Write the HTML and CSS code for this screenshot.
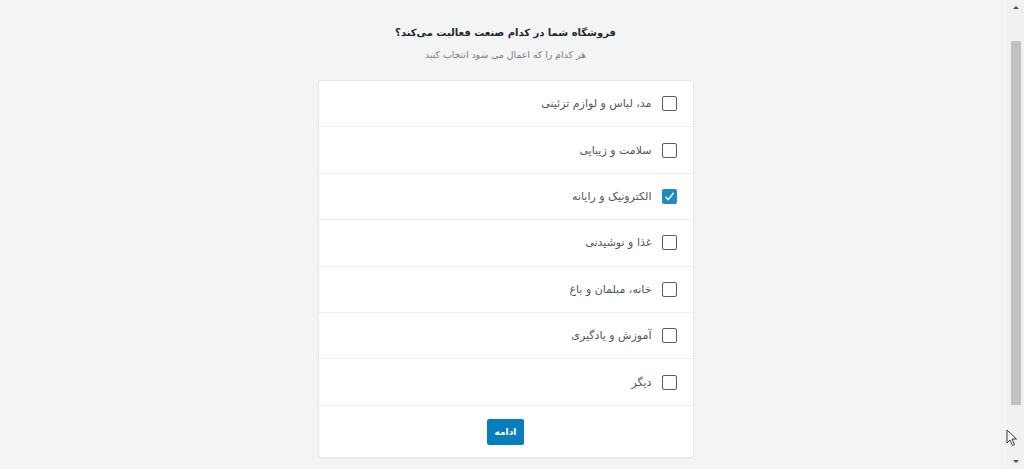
FILE: index.html
```html
<!DOCTYPE html>
<html lang="fa" dir="rtl">

<head>
    <meta charset="UTF-8">
    <meta name="viewport" content="width=device-width, initial-scale=1.0">
    <title>انتخاب صنعت</title>
    <link rel="stylesheet" href="styles.css">
</head>

<body>
    <div class="scrollbar">
        <span class="arrow up"></span>
        <div class="thumb"></div>
        <span class="arrow down"></span>
    </div>

    <main class="page">
        <h1 class="title">فروشگاه شما در کدام صنعت فعالیت می‌کند؟</h1>
        <p class="subtitle">هر کدام را که اعمال می شود انتخاب کنید</p>

        <form class="card">
            <label class="row"><span class="box"></span><span class="text">مد، لباس و لوازم تزئینی</span></label>
            <label class="row"><span class="box"></span><span class="text">سلامت و زیبایی</span></label>
            <label class="row"><span class="box checked">
                <svg width="15" height="15" viewBox="0 0 15 15"><path d="M3.5 7.8 L6.3 10.6 L11.6 3.8" fill="none" stroke="#fff" stroke-width="1.4"/></svg>
            </span><span class="text">الکترونیک و رایانه</span></label>
            <label class="row"><span class="box"></span><span class="text">غذا و نوشیدنی</span></label>
            <label class="row"><span class="box"></span><span class="text">خانه، مبلمان و باغ</span></label>
            <label class="row"><span class="box"></span><span class="text">آموزش و یادگیری</span></label>
            <label class="row"><span class="box"></span><span class="text">دیگر</span></label>
            <div class="footer">
                <button type="button">ادامه</button>
            </div>
        </form>
    </main>

    <!-- mouse pointer -->
    <svg class="cursor" width="12" height="18" viewBox="0 0 12 18">
        <path d="M1 1 L1 14 L4 11 L6.5 16.5 L8.5 15.5 L6 10 L10.5 10 Z" fill="#fff" stroke="#333" stroke-width="1"/>
    </svg>
</body>

</html>
```

FILE: styles.css
```css
body {
    margin: 0;
    height: 469px;
    overflow: hidden;
    background-color: #f3f4f4;
    font-family: "DejaVu Sans", sans-serif;
    display: flex;
    flex-direction: row;
}

.page {
    flex: 1;
    display: flex;
    flex-direction: column;
    align-items: center;
    padding-top: 27px;
    padding-left: 4px;
}

.title {
    margin: 0;
    font-size: 10px;
    font-weight: bold;
    color: #23282d;
}

.subtitle {
    margin: 11px 0 0;
    font-size: 9.3px;
    color: #787c82;
}

.card {
    margin-top: 20px;
    width: 376px;
    box-sizing: border-box;
    background: #fff;
    border: 1px solid #e3e5e6;
    border-radius: 3px;
    box-shadow: 0 1px 2px rgba(0, 0, 0, 0.04);
}

.row {
    display: flex;
    align-items: center;
    gap: 10px;
    height: 45.4px;
    padding-right: 16px;
    border-bottom: 1px solid #eef0f0;
    font-size: 11px;
    color: #50565c;
}

.box {
    width: 13px;
    height: 13px;
    border: 1px solid #555d66;
    border-radius: 2px;
    display: flex;
    align-items: center;
    justify-content: center;
}

.box.checked {
    width: 15px;
    height: 15px;
    border: none;
    background: #1e8cbe;
}

.footer {
    display: flex;
    justify-content: center;
    padding: 13px 0 12px;
}

button {
    width: 37px;
    height: 26px;
    padding: 0;
    border: none;
    border-radius: 2px;
    background-color: #0a7dbb;
    color: #fff;
    font-family: "DejaVu Sans", sans-serif;
    font-size: 9px;
    font-weight: bold;
}

.scrollbar {
    width: 17px;
    background: #f1f1f1;
    display: flex;
    flex-direction: column;
    align-items: center;
}

.thumb {
    width: 10px;
    height: 364px;
    margin-top: 32px;
    margin-left: 1px;
    background: #c1c1c1;
}

.arrow {
    width: 0;
    height: 0;
    border-left: 3px solid transparent;
    border-right: 3px solid transparent;
}

.arrow.up {
    margin-top: 6px;
    border-bottom: 3px solid #505050;
}

.arrow.down {
    margin-top: auto;
    margin-bottom: 6px;
    border-top: 3px solid #505050;
}

.cursor {
    position: absolute;
    left: 1006px;
    top: 429px;
}
```
